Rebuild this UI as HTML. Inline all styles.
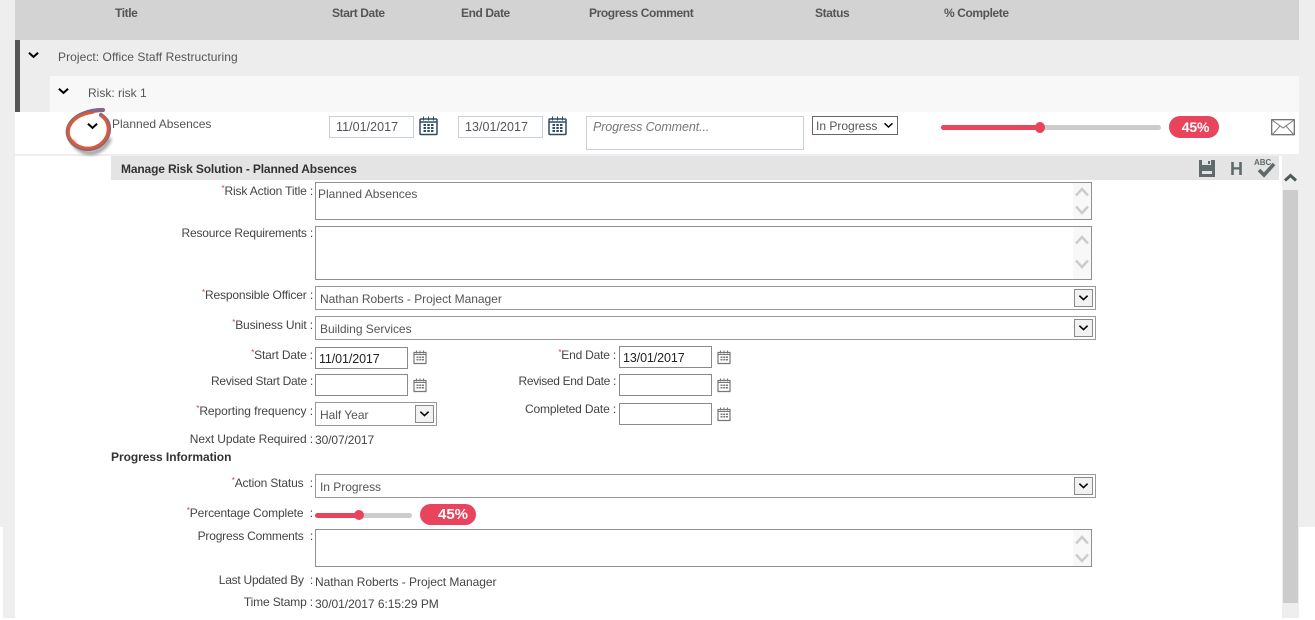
<!DOCTYPE html>
<html><head><meta charset="utf-8">
<style>
html,body{margin:0;padding:0;background:#fff}
#p{position:relative;width:1315px;height:620px;overflow:hidden;background:#fff;font:12px/16px "Liberation Sans",sans-serif;color:#444}
#p div,#p span.a,#p svg{position:absolute}
.t{white-space:nowrap}
.l{white-space:nowrap;text-align:right;width:300px;left:13px;letter-spacing:-.15px}
.l i{color:#e33;font-style:normal;font-size:8px;position:relative;top:-4px;line-height:0}
.h{font-weight:bold;color:#555;white-space:nowrap;top:5px;letter-spacing:-.4px}
.b{box-sizing:border-box;border:1px solid #8f8f8f;background:#fff}
.d{box-sizing:border-box;border:1px solid #c5d0da;background:#fff;color:#555;padding-left:6px;line-height:20px;font-size:12.5px;letter-spacing:.05px}
.sel{box-sizing:border-box;height:24px;border:1px solid #999;background:#fff;padding-left:4px;line-height:25px;white-space:nowrap;letter-spacing:-.03px}
.btn{box-sizing:border-box;width:19px;height:18px;border:1px solid #8a8a8a;background:#f2f2f2;top:2px;right:2px}
.sb{background:#f8f8f8;width:18px;top:0;bottom:0;right:0}
.date{box-sizing:border-box;width:93px;height:22px;border:1px solid #8a8a8a;background:#fff;padding-left:3px;line-height:23px;color:#222;font-size:12.5px;letter-spacing:-.1px}
</style></head><body>
<div id="p">
<svg width="0" height="0" style="position:absolute"><defs>
<symbol id="cal" viewBox="0 0 14 16"><path d="M1 3.5h12v11H1zM1 3.5" fill="#fff" stroke="#777" stroke-width="1.2"/><path d="M1 5.5h12" stroke="#777"/><path d="M3.5 1.5v3M7 1.5v3M10.500 1.500v3" stroke="#777"/><path d="M3.500 7.500h2v1.500h-2zM6.300 7.500h2v1.500h-2zM9 7.500h2v1.500h-2zM3.500 10h2v1.500h-2zM6.300 10h2v1.500h-2zM9 10h2v1.500h-2z" fill="#777"/></symbol>
<symbol id="cal2" viewBox="0 0 19 20"><rect x="1" y="3" width="17" height="15.500" rx="1" fill="#fff" stroke="#2a4d69" stroke-width="1.500"/><path d="M1 6h17" stroke="#2a4d69" stroke-width="1.500"/><path d="M4.500 .5v4M9.500 .5v4M14.500 .5v4" stroke="#2a4d69"/><path d="M4.500 8h2.500v2h-2.500zM8.300 8h2.500v2h-2.500zM12 8h2.500v2h-2.500zM4.500 11h2.500v2h-2.500zM8.300 11h2.500v2h-2.500zM12 11h2.500v2h-2.500zM4.500 14h2.500v2h-2.500zM8.300 14h2.500v2h-2.500zM12 14h2.500v2h-2.500z" fill="#2a4d69"/></symbol>
<symbol id="ch" viewBox="0 0 12 8"><path d="M1 1.500l5 4.500 5-4.500" fill="none" stroke="#000" stroke-width="2.200"/></symbol>
<symbol id="ch2" viewBox="0 0 12 8"><path d="M1.500 1.500l4.500 4.200 4.500-4.200" fill="none" stroke="#000" stroke-width="1.700"/></symbol>
<symbol id="up" viewBox="0 0 14 10"><path d="M1 8.500l6-6.500 6 6.500" fill="none" stroke="#ccc" stroke-width="2.500"/></symbol>
<symbol id="dn" viewBox="0 0 14 10"><path d="M1 1.500l6 6.500 6-6.500" fill="none" stroke="#ccc" stroke-width="2.500"/></symbol>
</defs></svg>

<!-- page bg -->
<div style="left:0;top:0;width:1315px;height:527px;background:#eee"></div>
<div style="left:0;top:527px;width:3px;height:93px;background:#fff"></div>
<div style="left:3px;top:527px;width:12px;height:91px;background:#eee"></div>
<div style="left:15px;top:0;width:1284px;height:620px;background:#fff"></div>

<!-- header -->
<div style="left:15px;top:0;width:1284px;height:40px;background:#d3d3d3"></div>
<div class="h" style="left:115px">Title</div>
<div class="h" style="left:332px">Start Date</div>
<div class="h" style="left:461px">End Date</div>
<div class="h" style="left:589px">Progress Comment</div>
<div class="h" style="left:815px">Status</div>
<div class="h" style="left:944px">% Complete</div>

<!-- project -->
<div style="left:15px;top:40px;width:1284px;height:72px;background:#ededed"></div>
<div style="left:15px;top:40px;width:5px;height:72px;background:#555"></div>
<div class="t" style="left:58px;top:49px;color:#555;letter-spacing:.06px">Project: Office Staff Restructuring</div>
<svg style="left:28px;top:51px" width="11" height="8"><use href="#ch"/></svg>
<div style="left:50px;top:76px;width:1249px;height:36px;background:#f8f8f8"></div>
<div class="t" style="left:88px;top:85px;color:#555">Risk: risk 1</div>
<svg style="left:58px;top:87px" width="11" height="8"><use href="#ch"/></svg>

<!-- row -->
<div style="left:15px;top:154px;width:1284px;height:2px;background:#eee"></div>
<div class="t" style="left:112px;top:116px;color:#555">Planned Absences</div>
<svg style="left:87px;top:122px" width="11" height="8"><use href="#ch"/></svg>
<svg style="left:62px;top:106px" width="56" height="54" viewBox="0 0 56 54">
<defs><filter id="s" x="-30%" y="-30%" width="160%" height="160%"><feGaussianBlur stdDeviation="1.500"/></filter></defs>
<path d="M10 34C13 42 21 47 28 47 37 47 45 40 48 32" fill="none" stroke="#777" stroke-width="4" filter="url(#s)" opacity=".75"/>
<path d="M41 4C27 4 12 9 7 20 2 32 13 43 26 43 38 43 47 33 47 23 47 15 43 12 39 9" fill="none" stroke="#8d6678" stroke-width="4.200" stroke-linecap="round"/>
<path d="M31 6.500C20 8 10 13 7 21 3 32 14 42 26 42 37 42 46 33 46 23 46 17 43 13 40 10" fill="none" stroke="#dd5a36" stroke-width="2.600" stroke-linecap="round"/>
<path d="M41 4L28 5.500" fill="none" stroke="#7a6a9a" stroke-width="1.500"/>
</svg>

<div class="d" style="left:329px;top:116px;width:85px;height:22px">11/01/2017</div>
<svg style="left:419px;top:116px" width="19" height="20"><use href="#cal2"/></svg>
<div class="d" style="left:458px;top:116px;width:85px;height:22px">13/01/2017</div>
<svg style="left:548px;top:116px" width="19" height="20"><use href="#cal2"/></svg>
<div class="d" style="left:586px;top:116px;width:218px;height:34px;font-style:italic;color:#777;line-height:20px;letter-spacing:-.1px">Progress Comment...</div>
<div style="left:812px;top:116px;width:86px;height:19px;box-sizing:border-box;border:1px solid #666;background:#fff;padding-left:3px;line-height:19px;color:#555">In Progress</div>
<svg style="left:883px;top:122px" width="11" height="7"><use href="#ch2"/></svg>
<div style="left:941px;top:125px;width:220px;height:5px;border-radius:3px;background:#ccc"></div>
<div style="left:941px;top:125px;width:100px;height:5px;border-radius:3px;background:#e8445c"></div>
<div style="left:1035px;top:122px;width:10px;height:11px;border-radius:50%;background:#e8445c"></div>
<div style="left:1169px;top:116px;width:50px;height:22px;border-radius:11px;background:#e8445c;color:#fff;font-weight:bold;font-size:14px;line-height:22px;text-align:center;padding-left:3px;box-sizing:border-box;letter-spacing:-.2px">45%</div>
<svg style="left:1271px;top:119px" width="24" height="17" viewBox="0 0 24 17"><rect x=".7" y=".7" width="22.600" height="15" fill="#fff" stroke="#666" stroke-width="1.200"/><path d="M1 1l11 8 11-8M1 16l8-9M23 16l-8-9" fill="none" stroke="#777"/></svg>

<!-- panel -->
<div style="left:111px;top:156px;width:1168px;height:24px;background:#e4e4e4"></div>
<div class="t" style="left:121px;top:161px;font-weight:bold;color:#333;letter-spacing:-.15px">Manage Risk Solution - Planned Absences</div>
<svg style="left:1199px;top:160px" width="16" height="17" viewBox="0 0 16 17"><path d="M0 0h16v17H0z" fill="#5f6b6b"/><rect x="3" y="0" width="9" height="5" fill="#e4e4e4"/><rect x="3" y="11" width="10" height="3" fill="#e4e4e4"/><rect x="9" y="1" width="2" height="3" fill="#5f6b6b"/></svg>
<div class="t" style="left:1230px;top:160px;font-weight:bold;font-size:18px;line-height:18px;color:#5f6b6b">H</div>
<div class="t" style="left:1254px;top:158px;font-weight:bold;font-size:8px;line-height:10px;color:#5f6b6b">ABC</div>
<svg style="left:1257px;top:162px" width="20" height="16" viewBox="0 0 20 16"><path d="M2 8l5 5 10-11" fill="none" stroke="#5f6b6b" stroke-width="3.600"/></svg>

<!-- scrollbar -->
<div style="left:1282px;top:156px;width:17px;height:462px;background:#eee"></div>
<div style="left:1283px;top:190px;width:15px;height:413px;background:#ccc"></div>
<svg style="left:1284px;top:173px" width="13" height="9" viewBox="0 0 13 9"><path d="M1 7.500l5.500-5 5.500 5" fill="none" stroke="#4f5a5a" stroke-width="3"/></svg>

<!-- form -->
<div class="l" style="top:183px"><i>*</i>Risk Action Title :</div>
<div class="b" style="left:315px;top:182px;width:777px;height:38px;padding:2px 2px;line-height:18px;color:#555">Planned Absences<div class="sb"><svg style="left:2px;top:4px" width="14" height="10"><use href="#up"/></svg><svg style="left:2px;top:22px" width="14" height="10"><use href="#dn"/></svg></div></div>

<div class="l" style="top:225px;letter-spacing:-.2px">Resource Requirements :</div>
<div class="b" style="left:315px;top:226px;width:777px;height:54px"><div class="sb"><svg style="left:2px;top:8px" width="14" height="10"><use href="#up"/></svg><svg style="left:2px;top:32px" width="14" height="10"><use href="#dn"/></svg></div></div>

<div class="l" style="top:287px"><i>*</i>Responsible Officer :</div>
<div class="sel" style="left:315px;top:286px;width:781px;color:#555">Nathan Roberts - Project Manager<div class="btn"><svg style="left:3px;top:4px" width="11" height="8"><use href="#ch2"/></svg></div></div>

<div class="l" style="top:317px"><i>*</i>Business Unit :</div>
<div class="sel" style="left:315px;top:316px;width:781px;color:#555">Building Services<div class="btn"><svg style="left:3px;top:4px" width="11" height="8"><use href="#ch2"/></svg></div></div>

<div class="l" style="top:347px"><i>*</i>Start Date :</div>
<div class="date" style="left:315px;top:347px">11/01/2017</div>
<svg style="left:413px;top:349px" width="14" height="16"><use href="#cal"/></svg>
<div class="l" style="top:347px;left:316px;letter-spacing:-.2px"><i>*</i>End Date :</div>
<div class="date" style="left:619px;top:346px">13/01/2017</div>
<svg style="left:717px;top:349px" width="14" height="16"><use href="#cal"/></svg>

<div class="l" style="top:373px;letter-spacing:-.27px">Revised Start Date :</div>
<div class="date" style="left:315px;top:374px"></div>
<svg style="left:413px;top:377px" width="14" height="16"><use href="#cal"/></svg>
<div class="l" style="top:373px;left:316px;letter-spacing:-.33px">Revised End Date :</div>
<div class="date" style="left:619px;top:374px"></div>
<svg style="left:717px;top:377px" width="14" height="16"><use href="#cal"/></svg>

<div class="l" style="top:403px;letter-spacing:-.05px"><i>*</i>Reporting frequency :</div>
<div class="sel" style="left:315px;top:402px;width:122px;color:#555">Half Year<div class="btn"><svg style="left:3px;top:4px" width="11" height="8"><use href="#ch2"/></svg></div></div>
<div class="l" style="top:401px;left:316px">Completed Date :</div>
<div class="date" style="left:619px;top:403px"></div>
<svg style="left:717px;top:406px" width="14" height="16"><use href="#cal"/></svg>

<div class="l" style="top:431px;letter-spacing:-.1px">Next Update Required :</div>
<div class="t" style="left:315px;top:432px;letter-spacing:-.1px">30/07/2017</div>

<div class="t" style="left:111px;top:449px;font-weight:bold;color:#333;letter-spacing:-.05px">Progress Information</div>

<div class="l" style="top:475px"><i>*</i>Action Status &nbsp;:</div>
<div class="sel" style="left:315px;top:474px;width:781px;color:#555">In Progress<div class="btn"><svg style="left:3px;top:4px" width="11" height="8"><use href="#ch2"/></svg></div></div>

<div class="l" style="top:505px;letter-spacing:-.13px"><i>*</i>Percentage Complete &nbsp;:</div>
<div style="left:315px;top:513px;width:97px;height:5px;border-radius:3px;background:#ccc"></div>
<div style="left:315px;top:513px;width:44px;height:5px;border-radius:3px;background:#e8445c"></div>
<div style="left:354px;top:510px;width:10px;height:10px;border-radius:50%;background:#e8445c"></div>
<div style="left:420px;top:504px;width:56px;height:21px;border-radius:11px;background:#e8445c;color:#fff;font-weight:bold;font-size:15px;line-height:21px;text-align:center;padding-left:10px;box-sizing:border-box">45%</div>

<div class="l" style="top:528px;letter-spacing:-.2px">Progress Comments &nbsp;:</div>
<div class="b" style="left:315px;top:529px;width:777px;height:38px"><div class="sb"><svg style="left:2px;top:5px" width="14" height="10"><use href="#up"/></svg><svg style="left:2px;top:23px" width="14" height="10"><use href="#dn"/></svg></div></div>

<div class="l" style="top:572px;letter-spacing:-.25px">Last Updated By &nbsp;:</div>
<div class="t" style="left:315px;top:574px;letter-spacing:-.04px">Nathan Roberts - Project Manager</div>
<div class="l" style="top:594px">Time Stamp :</div>
<div class="t" style="left:315px;top:596px;letter-spacing:-.05px">30/01/2017 6:15:29 PM</div>
</div>
</body></html>
